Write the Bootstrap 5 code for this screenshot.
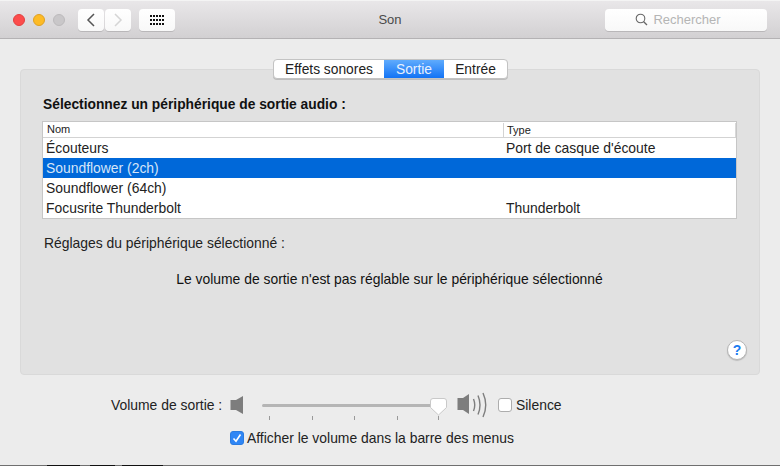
<!DOCTYPE html>
<html lang="fr">
<head>
<meta charset="utf-8">
<title>Son</title>
<link href="https://cdn.jsdelivr.net/npm/bootstrap@5.3.0/dist/css/bootstrap.min.css" rel="stylesheet">
<style>
html,body{margin:0;height:466px;overflow:hidden}
body{font-family:"Liberation Sans",Arial,sans-serif;font-size:13.9px;color:#1a1a1a;background:#ececec;line-height:16px}
.win{width:780px;height:466px;position:relative;overflow:hidden}
.tbar{height:39px;background:linear-gradient(#e9e7e9,#d2d0d2);border-bottom:1px solid #b4b2b4;border-top:1px solid #f4f4f4;padding-left:13px}
.light{width:12px;height:12px;border-radius:50%}
.lr{background:#fc4c4c;border:1px solid #e2403f}
.ly{background:#fdbb26;border:1px solid #dfa023}
.lg{background:#c9c7c9;border:1px solid #bcbabc}
.tb{height:22px;background:linear-gradient(#fff,#f8f8f8);border-radius:4px;box-shadow:0 1px 0 #b9b7b9}
.tb1{width:26px}
.tb2{width:36px;margin-left:8px}
.navg{gap:1px;margin-left:13px}
.srch{width:162px;color:#b5b5b5;font-size:13px;gap:5px;padding-right:16px;margin-right:13px}
.ttl{position:absolute;left:0;right:0;top:12px;text-align:center;color:#4a4a4a;font-size:13px}
.mainp{padding:30px 20px 0}
.panel{height:306px;background:#e1e1e1;border:1px solid #d9d9d9;border-radius:4px;position:relative;padding:27px 22px 0 21px}
.seg{position:absolute;top:-11px;left:252px;height:20px;background:#fff;border:1px solid #c3c3c3;border-radius:4px;box-shadow:0 1px 0 #bdbdbd;overflow:hidden}
.seg div{line-height:19px;font-size:13.8px;color:#222;text-align:center}
.seg .s1{width:110px}
.seg .s2{width:60px}
.seg .s3{width:63px}
.seg .on{background:linear-gradient(#5fabfd,#1273f5);color:#e8f1fe}
.ttlb{font-weight:700;font-size:13.8px;line-height:16px;margin:0 0 8px 1px;color:#111}
.tblw{width:695px;background:#fff;border:1px solid #c6c6c6;margin-bottom:16px}
.thd{height:16px;border-bottom:1px solid #d3d3d3;font-size:11px;line-height:15px;color:#222}
.thd span{display:block}
.c1{width:460px;padding-left:4px}
.c2{border-left:1px solid #d3d3d3;padding-left:3px;flex:1;height:14px;margin-top:1px;line-height:14px}
.c3{width:1px;height:14px;background:#d8d8d8;margin-top:1px}
.trw{height:20px;line-height:20px;font-size:13.9px;color:#222}
.trw .a{width:460px;padding-left:3px}
.trw .b{padding-left:3px}
.trw.sel{background:#0068d9;color:#d5e5f8}
.sub{margin-left:2px;line-height:16px;color:#222}
.msg{text-align:center;margin-top:20px;color:#111}
.help{position:absolute;left:706px;top:270px;width:20px;height:20px;border-radius:50%;background:#fff;border:1px solid #b5b5b5;box-shadow:0 1px 1px #bbb;color:#1c7cf0;font-weight:700;font-size:14px;line-height:18px;text-align:center}
.volr{height:22px;margin-top:19px;position:relative}
.vlab{position:absolute;left:111px;top:3px;color:#222}
.cbx{width:14px;height:14px;border-radius:3px;flex:none}
.sil{position:absolute;left:498px;top:3px;gap:4px;color:#222}
.cbx.off{background:#fff;border:1px solid #adadad}
.cbx.ck{background:#2f86f5;border:1px solid #2a7be0}
.showr{padding-left:230px;margin-top:14px;gap:3px;color:#222}
.spk1{left:229px;top:1px}
.sld{left:262px;top:0}
.spk2{left:456px;top:-2px}
.bot{position:absolute;left:0;right:0;bottom:0;height:1px;background:linear-gradient(90deg,#6f6f6f 47px,#111 47px,#111 80px,#6f6f6f 80px,#6f6f6f 90px,#111 90px,#111 115px,#6f6f6f 115px,#6f6f6f 122px,#111 122px,#111 163px,#6f6f6f 163px)}
</style>
</head>
<body>
<div class="win">
  <div class="tbar d-flex align-items-center">
    <div class="d-flex gap-2 align-items-center">
      <div class="light lr"></div><div class="light ly"></div><div class="light lg"></div>
    </div>
    <div class="navg d-flex align-items-center">
      <div class="tb tb1 d-flex align-items-center justify-content-center">
        <svg width="10" height="14" viewBox="0 0 10 14"><path d="M8 1 2 7l6 6" fill="none" stroke="#555" stroke-width="1.5"/></svg>
      </div>
      <div class="tb tb1 d-flex align-items-center justify-content-center">
        <svg width="10" height="14" viewBox="0 0 10 14"><path d="M2 1l6 6-6 6" fill="none" stroke="#d5d5d5" stroke-width="1.5"/></svg>
      </div>
    </div>
    <div class="tb tb2 d-flex align-items-center justify-content-center">
      <svg width="14" height="10" viewBox="0 0 14 10" fill="#111"><path d="M0 0h2v2H0zM3 0h2v2H3zM6 0h2v2H6zM9 0h2v2H9zM12 0h2v2h-2zM0 4h2v2H0zM3 4h2v2H3zM6 4h2v2H6zM9 4h2v2H9zM12 4h2v2h-2zM0 8h2v2H0zM3 8h2v2H3zM6 8h2v2H6zM9 8h2v2H9zM12 8h2v2h-2z"/></svg>
    </div>
    <div class="tb srch d-flex align-items-center justify-content-center ms-auto">
      <svg width="13" height="13" viewBox="0 0 13 13"><circle cx="5.5" cy="5.5" r="4.3" fill="none" stroke="#666" stroke-width="1.1"/><path d="M8.7 8.7 12 12" stroke="#666" stroke-width="1.3"/></svg>
      <span>Rechercher</span>
    </div>
  </div>
  <div class="ttl">Son</div>
  <div class="mainp">
    <div class="panel">
      <div class="seg d-flex">
        <div class="s1">Effets sonores</div><div class="s2 on">Sortie</div><div class="s3">Entrée</div>
      </div>
      <div class="ttlb">Sélectionnez un périphérique de sortie audio :</div>
      <div class="tblw">
        <div class="thd d-flex"><span class="c1">Nom</span><span class="c2">Type</span><span class="c3"></span></div>
        <div class="trw d-flex"><div class="a">Écouteurs</div><div class="b">Port de casque d'écoute</div></div>
        <div class="trw d-flex sel"><div class="a">Soundflower (2ch)</div></div>
        <div class="trw d-flex"><div class="a">Soundflower (64ch)</div></div>
        <div class="trw d-flex"><div class="a">Focusrite Thunderbolt</div><div class="b">Thunderbolt</div></div>
      </div>
      <div class="sub">Réglages du périphérique sélectionné :</div>
      <div class="msg">Le volume de sortie n'est pas réglable sur le périphérique sélectionné</div>
      <div class="help">?</div>
    </div>
  </div>
  <div class="volr">
    <span class="vlab">Volume de sortie :</span>
    <svg class="spk1 position-absolute" width="15" height="20" viewBox="0 0 15 20"><path d="M1.5 5H7l7-4v18l-7-4H1.5z" fill="#7d7d7d"/></svg>
    <svg class="sld position-absolute" width="190" height="28" viewBox="0 0 190 28">
      <rect x="0" y="10" width="172" height="3" rx="1.5" fill="#b5b5b5"/>
      <path d="M7.5 22v4M50.5 22v4M92.5 22v4M135.500 22v4M176.5 22v4" stroke="#999"/>
      <path d="M171 4.5h11a2.5 2.5 0 0 1 2.500 2.500v6.500l-8 7.500-8-7.500V7a2.500 2.500 0 0 1 2.500-2.500z" fill="#fff" stroke="#c9c9c9"/>
    </svg>
    <svg class="spk2 position-absolute" width="34" height="26" viewBox="0 0 34 26"><path d="M1.5 6H7l6-4v20l-6-4H1.5z" fill="#7d7d7d"/><g fill="none" stroke="#7d7d7d" stroke-width="1.4"><path d="M17.5 7q2.500 6 0 12"/><path d="M22 3.500q4 9.500 0 19"/><path d="M27 1q5.500 12 0 24"/></g></svg>
    <div class="sil d-flex align-items-center"><span class="cbx off"></span><span>Silence</span></div>
  </div>
  <div class="showr d-flex align-items-center">
    <span class="cbx ck d-flex align-items-center justify-content-center"><svg width="10" height="10" viewBox="0 0 10 10"><path d="M1.5 5.5 4 8.2 8.5 1.5" fill="none" stroke="#fff" stroke-width="1.6"/></svg></span>
    <span>Afficher le volume dans la barre des menus</span>
  </div>
  <div class="bot"></div>
</div>
</body>
</html>
